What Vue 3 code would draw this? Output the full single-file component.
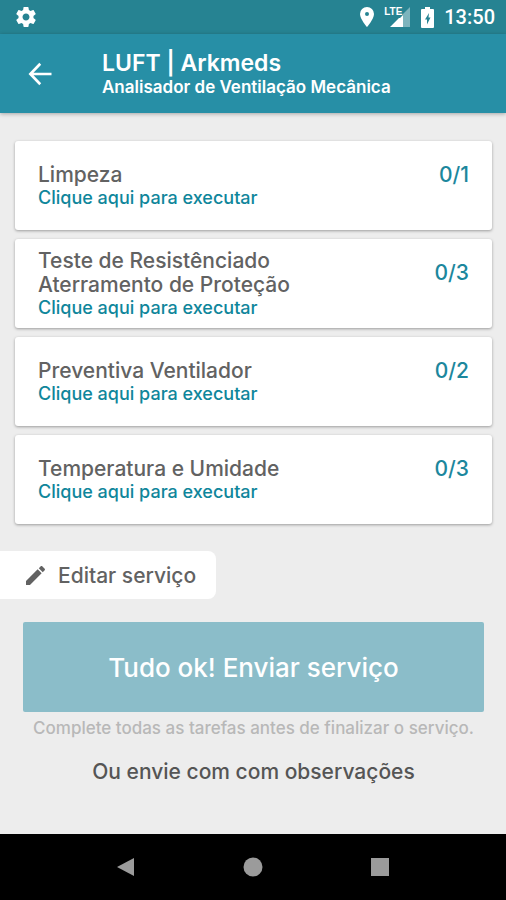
<template>
  <div class="screen">
    <div class="status-bar">
      <svg class="status-bar__icon" viewBox="0 0 24 24" aria-hidden="true">
        <path :d="icons.gear" />
      </svg>
      <div class="status-bar__right">
        <svg class="status-bar__pin" viewBox="0 0 14 20" aria-hidden="true">
          <path fill-rule="evenodd" d="M7 0a7 7 0 0 0-7 7c0 5 7 13 7 13s7-8 7-13a7 7 0 0 0-7-7zm0 5a2 2 0 1 1 0 4 2 2 0 0 1 0-4z" />
        </svg>
        <div class="status-bar__signal">
          <span class="status-bar__lte">LTE</span>
          <svg class="status-bar__cell" viewBox="0 0 20 20" aria-hidden="true">
            <path fill-opacity="0.4" d="M20 0v20H13V7z" />
            <path d="M13 8v12H0L9 11h1z" />
          </svg>
        </div>
        <svg class="status-bar__battery" viewBox="0 0 13 21" aria-hidden="true">
          <path fill-rule="evenodd" d="M4 0h5v2h3a1 1 0 0 1 1 1v17a1 1 0 0 1-1 1H1a1 1 0 0 1-1-1V3a1 1 0 0 1 1-1h3zM8 6L4 12.500H6V17.500l3.500-7H7.500z" />
        </svg>
        <span class="status-bar__time">13:50</span>
      </div>
    </div>

    <header class="app-bar">
      <button class="app-bar__back" type="button" aria-label="Voltar">
        <svg viewBox="0 0 24 24" aria-hidden="true">
          <path d="M23.500 10.700H5.500L13.200 2.700 11.300 0.800 0.500 12l10.800 11.200 1.900-1.900L5.500 13.300H23.500z" />
        </svg>
      </button>
      <div>
        <h1 class="app-bar__title">LUFT | Arkmeds</h1>
        <p class="app-bar__subtitle">Analisador de Ventilação Mecânica</p>
      </div>
    </header>

    <main class="content">
      <div class="tasks">
        <button v-for="task in tasks" :key="task.id" class="task" type="button">
          <span class="task__body">
            <span v-for="line in task.title" :key="line" class="task__title">{{ line }}</span>
            <span class="task__action">Clique aqui para executar</span>
          </span>
          <span class="task__count">{{ task.done }}/{{ task.total }}</span>
        </button>
      </div>

      <button class="edit" type="button">
        <svg class="edit__icon" viewBox="3 3 18 18" aria-hidden="true">
          <path :d="icons.pencil" />
        </svg>
        Editar serviço
      </button>

      <div class="submit">
        <button class="submit__button" type="button" disabled>Tudo ok! Enviar serviço</button>
        <p class="submit__hint">Complete todas as tarefas antes de finalizar o serviço.</p>
        <button class="submit__notes" type="button">Ou envie com com observações</button>
      </div>
    </main>

    <nav class="nav-bar">
      <button class="nav-bar__button" type="button" aria-label="Voltar">
        <svg viewBox="0 0 20 20" aria-hidden="true"><path d="M18 1v18L1 10z" /></svg>
      </button>
      <button class="nav-bar__button" type="button" aria-label="Início">
        <svg viewBox="0 0 20 20" aria-hidden="true"><circle cx="10" cy="10" r="9.500" /></svg>
      </button>
      <button class="nav-bar__button" type="button" aria-label="Recentes">
        <svg viewBox="0 0 20 20" aria-hidden="true"><path d="M1 1h18v18H1z" /></svg>
      </button>
    </nav>
  </div>
</template>

<script setup>
import { ref } from 'vue';

// Titles are split into the lines they are shown on
const tasks = ref([
  { id: 1, title: ['Limpeza'], done: 0, total: 1 },
  { id: 2, title: ['Teste de Resistênciado', 'Aterramento de Proteção'], done: 0, total: 3 },
  { id: 3, title: ['Preventiva Ventilador'], done: 0, total: 2 },
  { id: 4, title: ['Temperatura e Umidade'], done: 0, total: 3 }
]);

const icons = {
  gear: 'M19.430 12.980c.040-.320.070-.640.070-.980s-.030-.660-.070-.980l2.110-1.650c.190-.150.240-.420.120-.640l-2-3.460c-.120-.220-.390-.300-.610-.220l-2.490 1c-.520-.400-1.080-.730-1.690-.980l-.380-2.650A.488.488 0 0 0 14 2h-4c-.250 0-.460.180-.490.420l-.380 2.650c-.610.250-1.170.590-1.690.980l-2.490-1c-.230-.090-.490 0-.610.220l-2 3.460c-.130.220-.070.490.120.640l2.110 1.650c-.040.320-.070.650-.070.980s.030.660.070.980l-2.110 1.650c-.190.150-.240.420-.120.640l2 3.460c.120.220.390.300.610.220l2.490-1c.520.400 1.080.730 1.690.980l.380 2.650c.030.240.240.420.490.420h4c.250 0 .460-.180.490-.420l.380-2.650c.610-.250 1.170-.590 1.690-.980l2.490 1c.230.090.490 0 .610-.220l2-3.460c.120-.220.070-.490-.120-.640l-2.110-1.650zM12 15.500c-1.930 0-3.500-1.570-3.500-3.500s1.570-3.500 3.500-3.500 3.500 1.570 3.500 3.500-1.570 3.500-3.500 3.500z',
  pencil: 'M3 17.250V21h3.750L17.810 9.940l-3.750-3.750L3 17.250zM20.710 7.040c.390-.390.390-1.020 0-1.410l-2.340-2.340c-.390-.390-1.020-.390-1.410 0l-1.830 1.830 3.750 3.750 1.830-1.830z'
};
</script>

<style>
body {
  margin: 0;
}
</style>

<style scoped>
.screen {
  display: flex;
  flex-direction: column;
  min-height: 100vh;
  background: #ededed;
  color: #626262;
  font-family: Inter, "Open Sans", sans-serif;
  font-weight: 500;
}

button {
  margin: 0;
  padding: 0;
  border: none;
  background: none;
  color: inherit;
  font: inherit;
  cursor: pointer;
}

svg {
  display: block;
  fill: currentColor;
}

/* Status bar */
.status-bar {
  display: flex;
  align-items: center;
  justify-content: space-between;
  height: 34px;
  padding: 0 11px 0 14px;
  background: #268392;
  color: #fff;
}

.status-bar__icon {
  width: 24px;
  height: 24px;
}

.status-bar__right {
  display: flex;
  align-items: center;
}

.status-bar__pin {
  width: 14px;
  height: 20px;
  margin-right: 10px;
}

.status-bar__signal {
  display: flex;
  position: relative;
  margin-right: 11px;
  padding-left: 6px;
}

.status-bar__lte {
  position: absolute;
  top: 0;
  left: 0;
  font-family: "Liberation Sans Narrow", "Liberation Sans", sans-serif;
  font-size: 10px;
  font-weight: 700;
  line-height: 10px;
}

.status-bar__cell {
  width: 20px;
  height: 20px;
}

.status-bar__battery {
  width: 13px;
  height: 21px;
  margin-right: 10px;
}

.status-bar__time {
  font-family: Roboto, sans-serif;
  font-size: 20px;
}

/* App bar */
.app-bar {
  display: flex;
  align-items: center;
  height: 79px;
  background: #278fa6;
  box-shadow: 0 1px 4px rgba(0, 0, 0, 0.3);
  color: #fff;
}

.app-bar__back {
  width: 24px;
  margin: 0 50px 0 28px;
}

.app-bar__title,
.app-bar__subtitle {
  margin: 0;
  font-weight: 600;
  line-height: 24px;
}

.app-bar__title {
  padding-top: 2px;
  font-size: 23px;
}

.app-bar__subtitle {
  font-size: 17px;
}

/* Content */
.content {
  flex: 1;
  padding: 28px 0 40px;
}

.tasks {
  display: flex;
  flex-direction: column;
  gap: 9px;
  margin: 0 14px 0 15px;
}

.task {
  display: flex;
  align-items: center;
  justify-content: space-between;
  min-height: 89px;
  padding: 0 23px;
  border-radius: 3px;
  background: #fff;
  box-shadow: 0 1px 3px rgba(0, 0, 0, 0.35);
  text-align: left;
}

.task__title,
.task__action {
  display: block;
}

.task__title {
  font-size: 21px;
  line-height: 24px;
}

.task__action {
  color: #0f869b;
  font-size: 18px;
  line-height: 22px;
}

.task__count {
  align-self: flex-start;
  padding-top: 22px;
  color: #1c879d;
  font-size: 21px;
  line-height: 24px;
}

.edit {
  display: flex;
  align-items: center;
  height: 48px;
  margin-top: 27px;
  padding: 0 20px 0 26px;
  border-radius: 0 8px 8px 0;
  background: #fff;
  font-size: 21px;
}

.edit__icon {
  width: 19px;
  height: 19px;
  margin-right: 13px;
}

.submit {
  display: flex;
  flex-direction: column;
  align-items: center;
  margin: 23px 22px 0 23px;
}

.submit__button {
  width: 100%;
  height: 90px;
  border-radius: 2px;
  background: #8bbdc9;
  color: #fff;
  font-size: 26px;
  cursor: default;
}

.submit__hint {
  margin: 4px 0 20px;
  color: #b8b8b8;
  font-size: 17px;
  line-height: 24px;
  text-align: center;
}

.submit__notes {
  color: #555;
  font-size: 21px;
  line-height: 24px;
}

/* System navigation */
.nav-bar {
  display: flex;
  justify-content: center;
  gap: 107px;
  height: 66px;
  background: #000;
  color: #9b9b9b;
}

.nav-bar__button svg {
  width: 20px;
  height: 20px;
}
</style>
